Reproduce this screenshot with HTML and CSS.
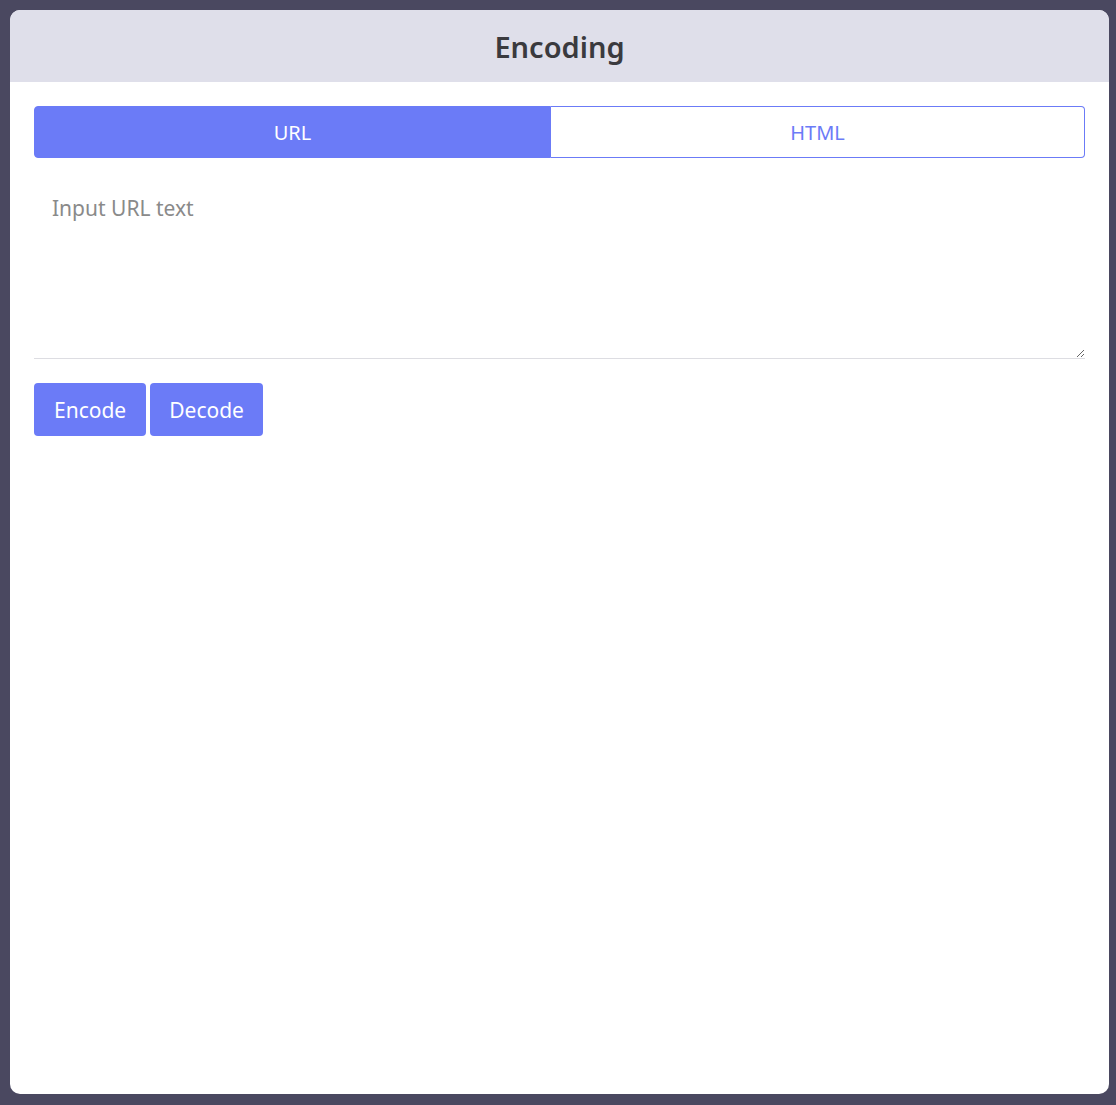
FILE: index.html
```html
<!DOCTYPE html>
<html lang="en">
<head>
<meta charset="utf-8">
<title>Encoding</title>
<link rel="stylesheet" href="styles.css">
</head>
<body>
<div class="card">
  <header class="card-header"><h1 class="title">Encoding</h1></header>
  <main class="card-body">
    <div class="tabs">
      <button class="tab tab-active">URL</button>
      <button class="tab">HTML</button>
    </div>
    <textarea class="input" placeholder="Input URL text"></textarea>
    <div class="actions">
      <button class="btn">Encode</button>
      <button class="btn">Decode</button>
    </div>
  </main>
</div>
</body>
</html>
```
FILE: styles.css
```css
html, body { margin: 0; padding: 0; }
body {
  background: #4a4860;
  font-family: "Noto Sans", "Open Sans", sans-serif;
  padding: 10px 7px 11px 10px;
}
.card {
  width: 1099px;
  height: 1084px;
  background: #fff;
  border-radius: 10px;
  overflow: hidden;
  display: flex;
  flex-direction: column;
}
.card-header {
  height: 72px;
  background: #dfdfea;
  display: flex;
  align-items: center;
  justify-content: center;
}
.title {
  margin: 0;
  font-size: 29px;
  font-weight: 600;
  color: #3a3a3e;
}
.card-body {
  padding: 24px 24px;
}
.tabs {
  display: flex;
  height: 52px;
  width: 1051px;
}
.tab {
  font-family: inherit;
  font-size: 20px;
  border: 1px solid #6b7bf7;
  background: #fff;
  color: #6b7bf7;
  cursor: pointer;
  padding: 0;
}
.tab:first-child { width: 517px; border-radius: 4px 0 0 4px; }
.tab:last-child { flex: 1; border-radius: 0 4px 4px 0; border-left: none; }
.tab-active { background: #6b7bf7; color: #fff; }
.input {
  display: block;
  box-sizing: border-box;
  width: 1051px;
  height: 177px;
  margin-top: 24px;
  border: none;
  border-bottom: 1px solid #dddde2;
  padding: 12px 18px;
  font-family: inherit;
  font-size: 21px;
  color: #333;
  outline: none;
}
.input::placeholder { color: #8a8a8a; }
.actions {
  display: flex;
  gap: 4px;
  margin-top: 24px;
}
.btn {
  height: 53px;
  padding: 0 19px;
  background: #6b7bf7;
  color: #fff;
  border: none;
  border-radius: 4px;
  font-family: inherit;
  font-size: 21px;
  cursor: pointer;
}
.btn:first-child { padding: 0 20px; }
```
